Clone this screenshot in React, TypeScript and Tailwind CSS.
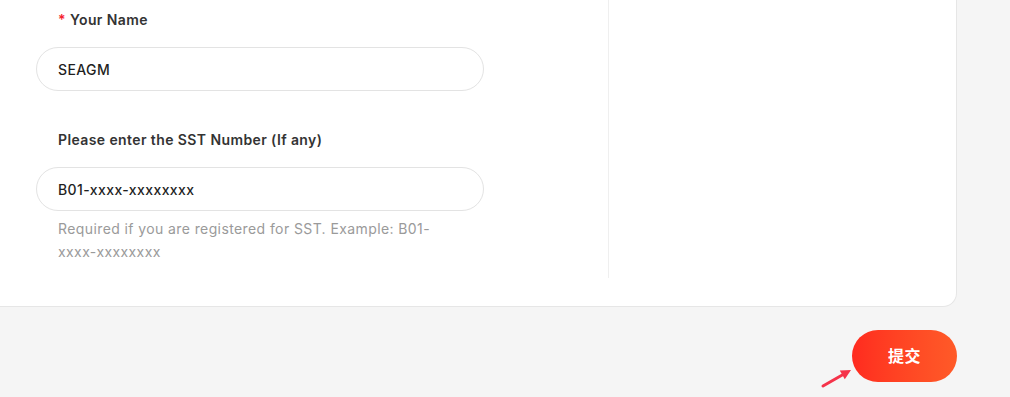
export default function App() {
  return (
    <div className="min-h-[397px] w-[1010px] bg-[#f5f5f5] font-['Inter','Noto_Sans_CJK_SC',sans-serif] tracking-[0.4px]">
      {/* Form card */}
      <div className="flex w-[957px] rounded-br-[14px] border-b border-r border-[#e6e6e6] bg-white pb-[28px]">
        <div className="w-[609px] border-r border-[#efefef] pl-[36px] pt-[10px] pb-[15px]">
          <label className="block pl-[22px] text-[14px] font-semibold leading-[20px] text-[#333]">
            <span className="mr-[4px] text-[#f5222d]">*</span>
            Your Name
          </label>
          <div className="mt-[17px] flex h-[44px] w-[448px] items-center rounded-full border border-[#e3e3e3] pl-[21px] text-[14px] font-medium text-[#1f1f1f]">
            SEAGM
          </div>

          <label className="mt-[39px] block pl-[22px] text-[14px] font-semibold leading-[20px] text-[#333]">
            Please enter the SST Number (If any)
          </label>
          <div className="mt-[17px] flex h-[44px] w-[448px] items-center rounded-full border border-[#e3e3e3] pl-[21px] text-[14px] font-medium text-[#1f1f1f]">
            B01-xxxx-xxxxxxxx
          </div>
          <p className="mt-[6px] w-[405px] pl-[22px] text-[14px] leading-[23px] text-[#9a9a9a]">
            Required if you are registered for SST. Example: B01-xxxx-xxxxxxxx
          </p>
        </div>
        <div className="flex-1" />
      </div>

      {/* Submit */}
      <div className="flex w-[957px] justify-end pt-[23px]">
        <div className="relative">
          <button className="h-[52px] w-[105px] rounded-full bg-gradient-to-r from-[#ff2a1f] to-[#ff5a28] text-[16px] font-bold text-white">
            提交
          </button>
          <svg className="absolute left-[-32px] top-[36px]" width="34" height="24" viewBox="0 0 34 24">
            <line x1="3" y1="20" x2="24" y2="8" stroke="#f5334a" strokeWidth="3" strokeLinecap="round" />
            <polygon points="31,4 24.8,13.3 19.8,4.6" fill="#f5334a" />
          </svg>
        </div>
      </div>
    </div>
  );
}
